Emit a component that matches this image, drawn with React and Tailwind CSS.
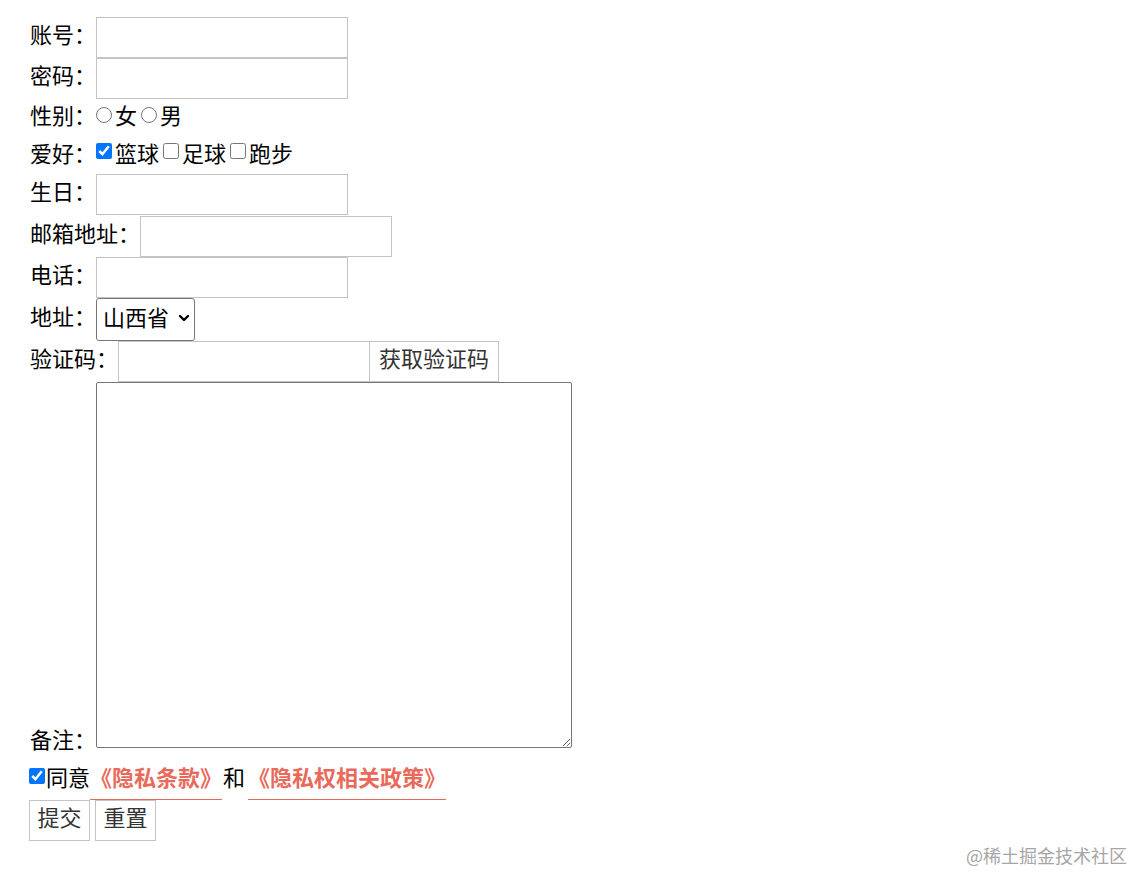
import React from "react";

function TextField({ label, width = "w-[252px]" }) {
  return (
    <div className="flex items-center">
      <span className="mb-[7px]">{label}</span>
      <input
        type="text"
        className={`${width} h-[41px] border border-[#c4c4c4] bg-white px-1 outline-none`}
      />
    </div>
  );
}

export default function App() {
  return (
    <div className="relative min-h-[874px] bg-white pt-[17px] pl-[30px] font-['Noto_Sans_CJK_SC',sans-serif] text-[22px] leading-[1.15] text-black">
      <form className="flex flex-col" onSubmit={(e) => e.preventDefault()}>
        <TextField label="账号：" />
        <TextField label="密码：" />

        {/* 性别 */}
        <div className="flex h-[37px] items-center">
          <span className="mb-[6px]">性别：</span>
          <input type="radio" name="sex" className="m-0 mb-[6px] h-[16px] w-[16px]" />
          <span className="mb-[6px] ml-[3px]">女</span>
          <input type="radio" name="sex" className="m-0 mb-[6px] ml-[4px] h-[16px] w-[16px]" />
          <span className="mb-[6px] ml-[3px]">男</span>
        </div>

        {/* 爱好 */}
        <div className="flex h-[38px] items-center">
          <span className="mb-[5px]">爱好：</span>
          <input type="checkbox" defaultChecked className="m-0 mb-[8px] h-[16px] w-[16px] accent-[#0075ff]" />
          <span className="mb-[5px] ml-[3px]">篮球</span>
          <input type="checkbox" className="m-0 mb-[8px] ml-[4px] h-[16px] w-[16px]" />
          <span className="mb-[5px] ml-[3px]">足球</span>
          <input type="checkbox" className="m-0 mb-[8px] ml-[4px] h-[16px] w-[16px]" />
          <span className="mb-[5px] ml-[3px]">跑步</span>
        </div>

        <TextField label="生日：" />
        <div className="h-px" />
        <TextField label="邮箱地址：" />
        <TextField label="电话：" />

        {/* 地址 */}
        <div className="flex h-[43px] items-center">
          <span className="mb-[7px]">地址：</span>
          <div className="relative">
            <select className="h-[43px] w-[99px] appearance-none rounded-[3px] border border-[#767676] bg-white pb-[5px] pl-[6px] text-[22px] outline-none">
              <option>山西省</option>
              <option>河北省</option>
              <option>山东省</option>
            </select>
            <svg
              viewBox="0 0 12 8"
              className="pointer-events-none absolute right-[5px] top-[16px] h-[8px] w-[12px]"
              fill="none"
              stroke="#000"
              strokeWidth="2.4"
              strokeLinecap="round"
              strokeLinejoin="round"
            >
              <path d="M2 2l4 4 4-4" />
            </svg>
          </div>
        </div>

        {/* 验证码 */}
        <div className="flex items-center">
          <span className="mb-[7px]">验证码：</span>
          <input type="text" className="h-[41px] w-[252px] border border-[#c4c4c4] bg-white px-1 outline-none" />
          <button type="button" className="h-[41px] w-[129px] border border-l-0 border-[#c4c4c4] bg-white pb-[7px] text-[#333]">
            获取验证码
          </button>
        </div>

        {/* 备注 */}
        <div className="flex items-end">
          <span className="mb-[-3px]">备注：</span>
          <textarea className="h-[366px] w-[476px] rounded-[2px] border border-[#767676] bg-white outline-none" />
        </div>

        {/* 同意 */}
        <div className="ml-[-1px] flex h-[52px] items-end leading-[22px]">
          <input type="checkbox" defaultChecked className="m-0 mb-[16px] h-[16px] w-[16px] accent-[#0075ff]" />
          <span className="mb-[13px] ml-[1px]">同意</span>
          <a href="#" className="border-0 border-b border-solid border-b-[#e96a5b] pb-[12px] font-bold text-[#e96a5b]">
            《隐私条款》
          </a>
          <span className="mb-[13px] ml-[1px] mr-[3px]">和</span>
          <a href="#" className="border-0 border-b border-solid border-b-[#e96a5b] pb-[12px] font-bold text-[#e96a5b]">
            《隐私权相关政策》
          </a>
        </div>

        {/* 按钮 */}
        <div className="ml-[-1px] flex gap-[5px]">
          <button type="submit" className="h-[41px] w-[61px] border border-[#c4c4c4] bg-white pb-[8px] text-[#333]">
            提交
          </button>
          <button type="reset" className="h-[41px] w-[61px] border border-[#c4c4c4] bg-white pb-[8px] text-[#333]">
            重置
          </button>
        </div>
      </form>

      <div className="absolute bottom-[10px] right-[6px] text-[18px] leading-none text-[#a6a6a6]">
        @稀土掘金技术社区
      </div>
    </div>
  );
}
